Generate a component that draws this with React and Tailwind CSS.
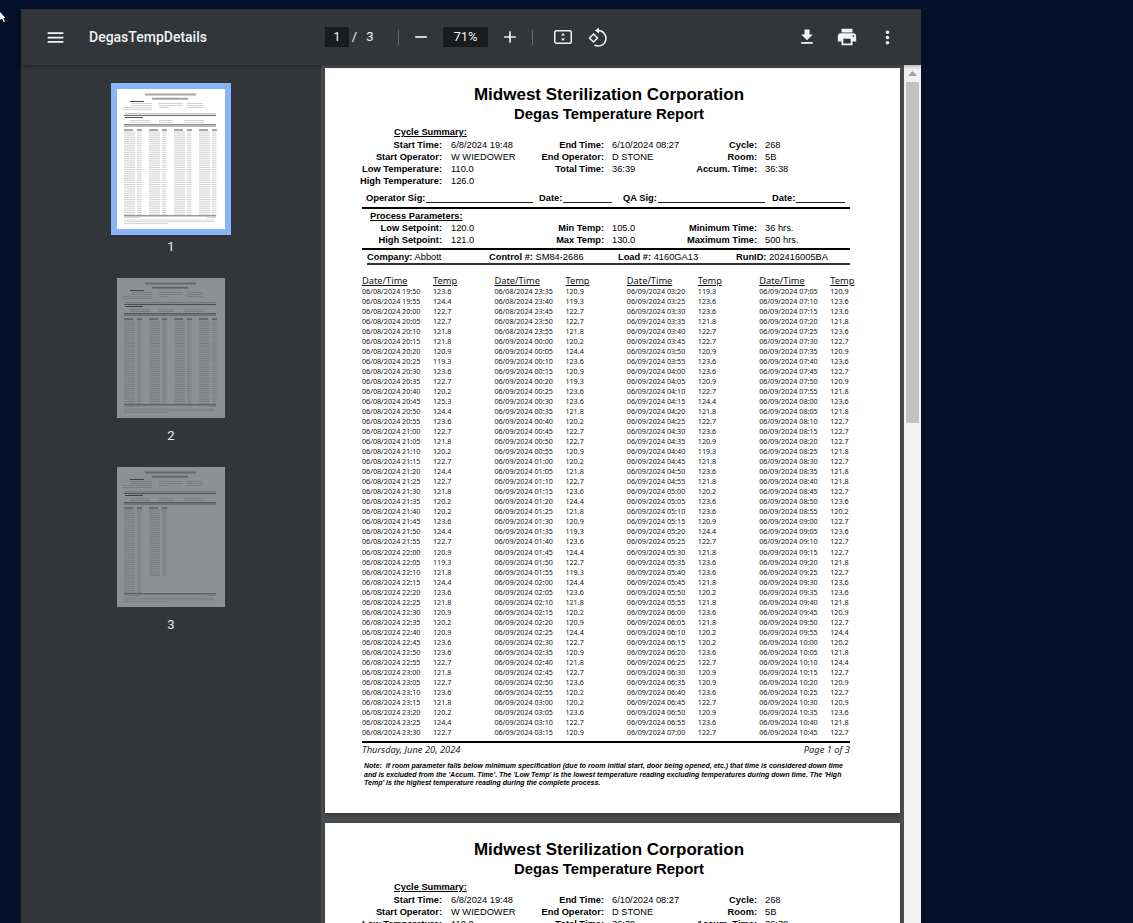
import React from 'react';

const temps = [
  '123.6','124.4','122.7','122.7','121.8','121.8','120.9','119.3','123.6','122.7','120.2','125.3','124.4','123.6','122.7','121.8','120.2','122.7','124.4','122.7','121.8','120.2','120.2','123.6','124.4','122.7','120.9','119.3','121.8','124.4','123.6','121.8','120.9','120.2','120.9','123.6','123.6','122.7','121.8','122.7','123.6','121.8','120.2','124.4','122.7',
  '120.9','119.3','122.7','122.7','121.8','120.2','124.4','123.6','120.9','119.3','123.6','123.6','121.8','120.2','122.7','122.7','120.9','120.2','121.8','122.7','123.6','124.4','121.8','120.9','119.3','123.6','124.4','122.7','119.3','124.4','123.6','121.8','120.2','120.9','124.4','122.7','120.9','121.8','122.7','123.6','120.2','120.2','123.6','122.7','120.9',
  '119.3','123.6','123.6','121.8','122.7','122.7','120.9','123.6','123.6','120.9','122.7','124.4','121.8','122.7','123.6','120.9','119.3','121.8','123.6','121.8','120.2','123.6','123.6','120.9','124.4','122.7','121.8','123.6','123.6','121.8','120.2','121.8','123.6','121.8','120.2','120.2','123.6','122.7','120.9','120.9','123.6','122.7','120.9','123.6','122.7',
  '120.9','123.6','123.6','121.8','123.6','122.7','120.9','123.6','122.7','120.9','121.8','123.6','121.8','122.7','122.7','122.7','121.8','122.7','121.8','121.8','122.7','123.6','120.2','122.7','123.6','122.7','122.7','121.8','122.7','123.6','123.6','121.8','120.9','122.7','124.4','120.2','121.8','124.4','122.7','120.9','122.7','120.9','123.6','121.8','122.7',
];

const pad = (n) => String(n).padStart(2, '0');

// readings are every 5 minutes, first one is 06/08 19:50
const readings = temps.map((temp, i) => {
  const total = 19 * 60 + 50 + i * 5;
  const day = total >= 24 * 60 ? '09' : '08';
  const mins = total % (24 * 60);
  return { time: `06/${day}/2024 ${pad(Math.floor(mins / 60))}:${pad(mins % 60)}`, temp };
});

const columns = [0, 1, 2, 3].map((c) => readings.slice(c * 45, c * 45 + 45));

const summaryRows = [
  ['Start Time:', '6/8/2024 19:48', 'End Time:', '6/10/2024 08:27', 'Cycle:', '268'],
  ['Start Operator:', 'W WIEDOWER', 'End Operator:', 'D STONE', 'Room:', '5B'],
  ['Low Temperature:', '110.0', 'Total Time:', '36:39', 'Accum. Time:', '36:38'],
  ['High Temperature:', '126.0', '', '', '', ''],
];

const processRows = [
  ['Low Setpoint:', '120.0', 'Min Temp:', '105.0', 'Minimum Time:', '36 hrs.'],
  ['High Setpoint:', '121.0', 'Max Temp:', '130.0', 'Maximum Time:', '500 hrs.'],
];

const FieldRow = ({ row }) => (
  <div className="-ml-[6px] grid h-[12px] grid-cols-[86px_82px_80px_76px_77px_93px] items-center leading-[12px]">
    <span className="text-right font-bold whitespace-nowrap">{row[0]}</span>
    <span className="pl-[9px] whitespace-nowrap">{row[1]}</span>
    <span className="text-right font-bold whitespace-nowrap">{row[2]}</span>
    <span className="pl-[8px] whitespace-nowrap">{row[3]}</span>
    <span className="text-right font-bold whitespace-nowrap">{row[4]}</span>
    <span className="pl-[8px] whitespace-nowrap">{row[5]}</span>
  </div>
);

const SigField = ({ label, className }) => (
  <div className={`flex items-end ${className}`}>
    <span className="font-bold whitespace-nowrap">{label}</span>
    <span className="mb-[1px] ml-[1px] flex-1 border-b border-[#222]"></span>
  </div>
);

const ReportPage = ({ headerOnly }) => (
  <div className="h-[745px] w-[575px] shrink-0 bg-white pt-[16px] pl-[37px] font-['Liberation_Sans',Arial,sans-serif] text-[9.3px] text-black shadow-[0_2px_4px_rgba(0,0,0,0.4)]">
    <div className="w-[488px]">
      <div className="h-[20px] pl-[6px] text-center text-[17px] leading-[21px] font-bold whitespace-nowrap">Midwest Sterilization Corporation</div>
      <div className="h-[20px] pl-[6px] text-center text-[14.9px] leading-[20px] font-bold whitespace-nowrap">Degas Temperature Report</div>

      <div className="mt-[2px] h-[12px] pl-[32px] leading-[12px] font-bold underline">Cycle Summary:</div>
      <div className="mt-[1px]">
        {summaryRows.map((row) => (
          <FieldRow key={row[0]} row={row} />
        ))}
      </div>

      {/* the second page only shows its top part in the viewport */}
      {!headerOnly && (
        <>
          <div className="mt-[5px] flex h-[12px] pl-[4px] leading-[12px]">
            <SigField label="Operator Sig:" className="w-[167px]" />
            <SigField label="Date:" className="ml-[6px] w-[73px]" />
            <SigField label="QA Sig:" className="ml-[11px] w-[142px]" />
            <SigField label="Date:" className="ml-[7px] w-[73px]" />
          </div>
          <div className="mt-[3px] h-[2px] bg-black"></div>

          <div className="mt-[1px] h-[12px] pl-[8px] leading-[12px] font-bold underline">Process Parameters:</div>
          {processRows.map((row) => (
            <FieldRow key={row[0]} row={row} />
          ))}
          <div className="mt-[2px] h-[2px] bg-black"></div>

          <div className="mt-[1px] flex h-[12px] pl-[5px] leading-[12px] whitespace-nowrap">
            <div className="w-[122px]"><b>Company:</b> Abbott</div>
            <div className="w-[129px]"><b>Control #:</b> SM84-2686</div>
            <div className="w-[118px]"><b>Load #:</b> 4160GA13</div>
            <div><b>RunID:</b> 202416005BA</div>
          </div>
          <div className="ml-[5px] h-[2px] bg-[#333]"></div>

          <div className="mt-[10px] flex w-[500px] font-['Noto_Sans',Tahoma,sans-serif] text-[#111]">
            {columns.map((col) => (
              <div key={col[0].time} className="w-[132.4px] shrink-0">
                <div className="flex h-[11px] text-[9.3px] leading-[11px] underline">
                  <span className="w-[71px]">Date/Time</span>
                  <span>Temp</span>
                </div>
                {col.map((r, i) => (
                  <div key={r.time} className={`flex h-[10px] text-[7.2px] leading-[10px] ${i === 26 ? 'mt-[1px]' : ''}`}>
                    <span className="w-[71px] whitespace-nowrap">{r.time}</span>
                    <span>{r.temp}</span>
                  </div>
                ))}
              </div>
            ))}
          </div>

          <div className="mt-[4px] h-[2px] bg-black"></div>
          <div className="flex h-[13px] justify-between font-['Noto_Sans',Tahoma,sans-serif] text-[9.3px] leading-[14px] text-[#222] italic">
            <span>Thursday, June 20, 2024</span>
            <span>Page 1 of 3</span>
          </div>
          <div className="mt-[6px] ml-[2px] w-[470px] text-[7px] leading-[8.5px] font-bold italic">
            <div className="whitespace-nowrap">Note:&nbsp; If room parameter falls below minimum specification (due to room initial start, door being opened, etc.) that time is considered down time</div>
            <div className="whitespace-nowrap">and is excluded from the 'Accum. Time'. The 'Low Temp' is the lowest temperature reading excluding temperatures during down time. The 'High</div>
            <div className="whitespace-nowrap">Temp' is the highest temperature reading during the complete process.</div>
          </div>
        </>
      )}
    </div>
  </div>
);

// thumbnails are a raster in the real viewer, so they get drawn as smudged bars
const ThumbDrawing = ({ cols = 4, colRows = [45, 45, 45, 45] }) => {
  const colX = [7, 32, 57, 82];
  return (
    <svg width="108" height="140" viewBox="0 0 108 140" className="block">
      <rect width="108" height="140" fill="#fff" />
      <rect x="28" y="4.5" width="51" height="2" fill="#a8a8a8" />
      <rect x="35" y="8.8" width="36" height="1.8" fill="#9a9a9a" />
      <rect x="13" y="12" width="14" height="0.8" fill="#222" />
      {[14, 16, 18, 20].map((y, i) => (
        <g key={y} fill="#d2d2d2">
          <rect x={i > 1 ? 6 : 14} y={y} width={i > 1 ? 29 : 21} height="1" />
          {i < 3 && <rect x="42" y={y} width={i === 2 ? 10 : 24} height="1" />}
          {i < 3 && <rect x="70" y={y} width="16" height="1" />}
        </g>
      ))}
      <rect x="8" y="24" width="91" height="1.4" fill="#c4c4c4" />
      <rect x="7" y="26" width="92" height="0.8" fill="#444" />
      <rect x="8" y="28" width="18" height="0.8" fill="#222" />
      {[31, 33].map((y) => (
        <g key={y} fill="#d2d2d2">
          <rect x="13" y={y} width="20" height="1" />
          <rect x="42" y={y} width="14" height="1" />
          <rect x="67" y={y} width="20" height="1" />
        </g>
      ))}
      <rect x="7" y="35" width="92" height="2.6" fill="#8c8c8c" />
      <rect x="7" y="36" width="92" height="0.6" fill="#dcdcdc" />
      {Array.from({ length: cols }).map((_, c) => (
        <g key={c}>
          <rect x={colX[c]} y="40.6" width="9" height="0.8" fill="#222" />
          <rect x={colX[c] + 13} y="40.6" width="5" height="0.8" fill="#222" />
          {Array.from({ length: colRows[c] }).map((_, r) => (
            <g key={r} fill="#d4d4d4">
              <rect x={colX[c]} y={42.6 + r * 1.87} width="11" height="1" />
              <rect x={colX[c] + 13} y={42.6 + r * 1.87} width="4.5" height="1" />
            </g>
          ))}
        </g>
      ))}
      <rect x="7" y="126.4" width="92" height="0.9" fill="#555" />
      <rect x="7" y="128" width="16" height="0.8" fill="#ccc" />
      <rect x="90" y="128" width="9" height="0.8" fill="#ccc" />
      <rect x="7" y="130.6" width="90" height="0.8" fill="#ccc" />
      <rect x="7" y="132.4" width="91" height="0.8" fill="#ccc" />
      <rect x="7" y="134.2" width="44" height="0.8" fill="#ccc" />
    </svg>
  );
};

const Thumb = ({ n, active, cols, colRows }) => (
  <div className="flex flex-col items-center">
    <div className={active ? 'border-[6px] border-[#8ab4f8]' : 'border-[6px] border-transparent'}>
      <div className={active ? '' : 'opacity-[0.45]'}>
        <ThumbDrawing cols={cols} colRows={colRows} />
      </div>
    </div>
    <div className="h-[37px] pt-[4px] text-[13px] leading-[16px] text-[#e8eaed]">{n}</div>
  </div>
);

const Icon = ({ d, size = 24, className = '' }) => (
  <svg width={size} height={size} viewBox="0 0 24 24" fill="#f1f3f4" className={className}>
    <path d={d} />
  </svg>
);

const IconBox = ({ children, className = 'w-[40px]' }) => (
  <div className={`flex h-[24px] shrink-0 items-center justify-center ${className}`}>{children}</div>
);

const Toolbar = () => (
  <div className="relative z-10 flex h-[56px] shrink-0 items-center bg-[#323639] font-['Roboto',sans-serif] text-[#f1f3f4] shadow-[0_1px_4px_rgba(0,0,0,0.35)]">
    <div className="flex w-[304px] shrink-0 items-center">
      <IconBox className="w-[68px]">
        <Icon size={21} d="M3 18h18v-2H3v2zm0-5h18v-2H3v2zm0-7v2h18V6H3z" />
      </IconBox>
      <span className="text-[14px] leading-[20px] font-medium whitespace-nowrap">DegasTempDetails</span>
    </div>

    <div className="flex items-center text-[13px]">
      <div className="flex h-[20px] w-[24px] items-center justify-center bg-[#191b1c]">1</div>
      <span className="w-[11px] text-center">/</span>
      <span className="w-[20px] text-center">3</span>
      <div className="ml-[18px] h-[15px] w-px bg-[#6a6d70]"></div>
      <IconBox className="w-[44px]">
        <Icon size={20} d="M19 13H5v-2h14v2z" />
      </IconBox>
      <div className="flex h-[20px] w-[45px] items-center justify-center bg-[#191b1c]">71%</div>
      <IconBox className="w-[44px]">
        <Icon size={20} d="M19 13h-6v6h-2v-6H5v-2h6V5h2v6h6v2z" />
      </IconBox>
      <div className="h-[15px] w-px bg-[#6a6d70]"></div>
      <IconBox className="ml-[20px] w-[20px]">
        <svg width="20" height="16" viewBox="0 0 20 16" fill="none">
          <rect x="1.75" y="1.75" width="16.5" height="12.5" rx="1.5" stroke="#f1f3f4" strokeWidth="1.5" />
          <path d="M10 4l2 2.4H8zM10 12l-2-2.4h4z" fill="#f1f3f4" />
        </svg>
      </IconBox>
      <IconBox className="ml-[13px] w-[24px]">
        <svg width="24" height="24" viewBox="0 0 24 24" fill="none">
          <path d="M7.5 9l4 4-4 4-4-4z" stroke="#f1f3f4" strokeWidth="1.5" />
          <path d="M12 5.6A7.7 7.7 0 1 1 8.5 20" stroke="#f1f3f4" strokeWidth="1.5" />
          <path d="M13 2.4v6.4L9 5.6z" fill="#f1f3f4" />
        </svg>
      </IconBox>
    </div>

    <div className="ml-auto flex items-center pr-[14px]">
      <IconBox>
        <Icon size={20} d="M19 9h-4V3H9v6H5l7 7 7-7zM5 18v2h14v-2H5z" />
      </IconBox>
      <IconBox>
        <Icon size={22} d="M19 8H5c-1.66 0-3 1.34-3 3v6h4v4h12v-4h4v-6c0-1.66-1.34-3-3-3zm-3 11H8v-5h8v5zm3-7c-.55 0-1-.45-1-1s.45-1 1-1 1 .45 1 1-.45 1-1 1zm-1-9H6v4h12V3z" />
      </IconBox>
      <IconBox>
        <Icon size={21} d="M12 8c1.1 0 2-.9 2-2s-.9-2-2-2-2 .9-2 2 .9 2 2 2zm0 2c-1.1 0-2 .9-2 2s.9 2 2 2 2-.9 2-2-.9-2-2-2zm0 6c-1.1 0-2 .9-2 2s.9 2 2 2 2-.9 2-2-.9-2-2-2z" />
      </IconBox>
    </div>
  </div>
);

const App = () => {
  return (
    <div className="relative h-[923px] w-[1133px] overflow-hidden bg-[#04112b] pt-[9px] pl-[21px]">
      {/* mouse pointer, cut off by the left edge */}
      <svg width="6" height="11" viewBox="0 0 6 11" className="absolute top-[12px] left-0">
        <path d="M0 0l5.5 6H3.6l1.4 3.4-1.4.6L2 6.6 0 8z" fill="#fff" />
      </svg>

      <div className="flex h-[914px] w-[900px] flex-col">
        <Toolbar />
        <div className="flex min-h-0 flex-1">
          <div className="flex w-[300px] shrink-0 flex-col items-center bg-[#323639] pt-[18px] font-['Roboto',sans-serif]">
            <Thumb n={1} active />
            <Thumb n={2} />
            <Thumb n={3} cols={2} colRows={[45, 36]} />
          </div>
          <div className="flex min-w-0 flex-1 bg-[#4b4e51]">
            <div className="flex min-w-0 flex-1 flex-col gap-[10px] overflow-hidden pt-[3px] pl-[4px]">
              <ReportPage />
              <ReportPage headerOnly />
            </div>
            <div className="flex w-[17px] shrink-0 flex-col items-center bg-[#f1f1f1]">
              <div className="flex h-[17px] w-full items-center justify-center">
                <svg width="9" height="5" viewBox="0 0 9 5"><path d="M4.5 0L9 5H0z" fill="#a3a3a3" /></svg>
              </div>
              <div className="h-[341px] w-[13px] bg-[#c1c1c1]"></div>
            </div>
          </div>
        </div>
      </div>
    </div>
  );
};

export default App;
